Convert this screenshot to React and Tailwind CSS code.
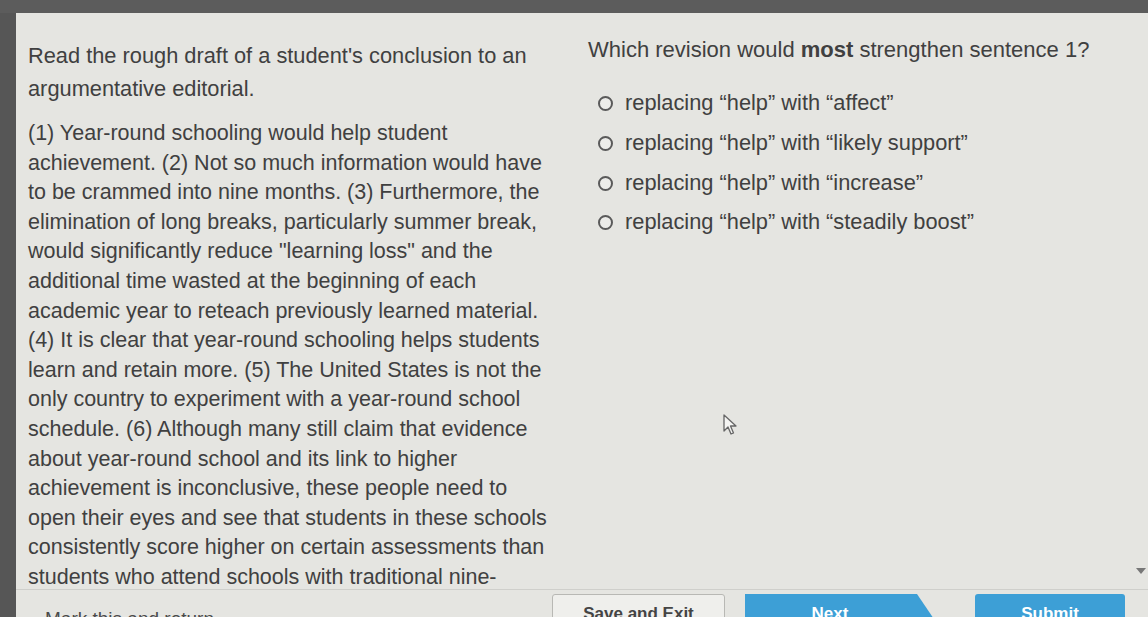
import React from "react";

const passage = [
  "(1) Year-round schooling would help student",
  "achievement. (2) Not so much information would have",
  "to be crammed into nine months. (3) Furthermore, the",
  "elimination of long breaks, particularly summer break,",
  'would significantly reduce "learning loss" and the',
  "additional time wasted at the beginning of each",
  "academic year to reteach previously learned material.",
  "(4) It is clear that year-round schooling helps students",
  "learn and retain more. (5) The United States is not the",
  "only country to experiment with a year-round school",
  "schedule. (6) Although many still claim that evidence",
  "about year-round school and its link to higher",
  "achievement is inconclusive, these people need to",
  "open their eyes and see that students in these schools",
  "consistently score higher on certain assessments than",
  "students who attend schools with traditional nine-",
];

const options = [
  "replacing \u201chelp\u201d with \u201caffect\u201d",
  "replacing \u201chelp\u201d with \u201clikely support\u201d",
  "replacing \u201chelp\u201d with \u201cincrease\u201d",
  "replacing \u201chelp\u201d with \u201csteadily boost\u201d",
];

export default function App() {
  return (
    <div
      className="w-[1148px] h-[617px] overflow-hidden bg-[#585858] flex flex-col text-[#404040]"
      style={{ fontFamily: '"Liberation Sans", Arial, sans-serif' }}
    >
      <div className="h-[13px] shrink-0 bg-[#5c5c5c]" />
      <div className="flex flex-1 min-h-0">
        <div className="w-[16px] shrink-0 bg-[#565656]" />
        <div className="flex-1 bg-[#e5e5e1] flex flex-col relative min-h-0">
          <div className="flex h-[576px] shrink-0">
            <div className="w-[556px] shrink-0 pl-[12px] pt-[26px]">
              <p className="text-[21.8px] leading-[33px] w-[530px]">
                Read the rough draft of a student's conclusion to an argumentative editorial.
              </p>
              <div className="mt-[14px] text-[21.5px] leading-[29.6px]">
                {passage.map((l, i) => (
                  <div key={i} className="whitespace-nowrap">
                    {l}
                  </div>
                ))}
              </div>
            </div>
            <div className="flex-1 pl-[16px] pt-[22px]">
              <p className="text-[22px] leading-[30px] whitespace-nowrap">
                Which revision would <span className="font-bold">most</span> strengthen sentence 1?
              </p>
              <div className="mt-[24px] flex flex-col gap-[10.2px]">
                {options.map((o, i) => (
                  <div key={i} className="flex items-center h-[29.5px]">
                    <span className="ml-[10px] w-[15px] h-[15px] rounded-full border-[2px] border-[#5a5a5a] bg-[#ecece9]" />
                    <span className="ml-[12px] text-[21.8px] whitespace-nowrap">{o}</span>
                  </div>
                ))}
              </div>
            </div>
          </div>
          <div className="h-[1px] bg-[#cfcfcb] shrink-0" />
          <div className="flex items-start pt-[4px] shrink-0">
            <div className="w-[536px] shrink-0 pl-[29px] pt-[15px] text-[19px] leading-[20px] text-[#4a4a4a] whitespace-nowrap">
              Mark this and return
            </div>
            <button className="w-[173px] h-[38px] border border-[#b8b8b4] rounded-[3px] bg-[#efefec] text-[17px] font-bold text-[#444] pt-[2px]">
              Save and Exit
            </button>
            <button className="ml-[20px] w-[190px] h-[38px] bg-[#3d9fd6] text-white text-[17px] font-bold pr-[20px] pt-[2px] [clip-path:polygon(0_0,calc(100%-18px)_0,100%_70%,100%_100%,0_100%)]">
              Next
            </button>
            <button className="ml-[40px] w-[150px] h-[38px] rounded-[3px] bg-[#3d9fd6] text-white text-[17px] font-bold pt-[2px]">
              Submit
            </button>
          </div>
          <svg
            className="absolute left-[707px] top-[401px]"
            width="16"
            height="22"
            viewBox="0 0 16 22"
          >
            <path
              d="M1 1 L1 17 L5 13 L8 20 L10.5 19 L7.5 12 L13 12 Z"
              fill="#f4f4f2"
              stroke="#666"
              strokeWidth="1.3"
              strokeLinejoin="round"
            />
          </svg>
          <div className="absolute right-[2px] top-[555px] w-0 h-0 border-l-[5px] border-r-[5px] border-t-[6px] border-l-transparent border-r-transparent border-t-[#777]" />
        </div>
      </div>
    </div>
  );
}
